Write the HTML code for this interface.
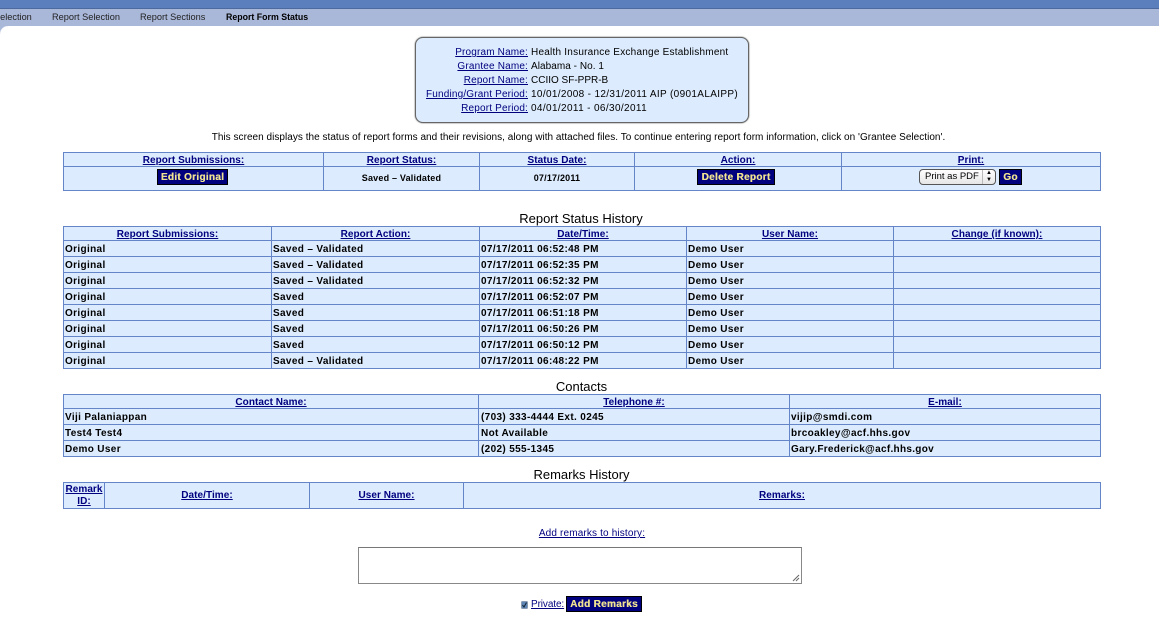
<!DOCTYPE html>
<html><head><meta charset="utf-8"><style>
html,body{margin:0;padding:0;width:1159px;height:626px;overflow:hidden;background:#fff;font-family:"Liberation Sans",Arial,sans-serif;color:#000}
.a{position:absolute;white-space:nowrap}
a{color:#00007f;text-decoration:underline}
#top{left:0;top:0;width:1159px;box-sizing:border-box;height:9px;background:#5b7fbd;border-bottom:1px solid #4c6a9e}
#nav{left:0;top:9px;width:1159px;height:17px;background:#a9b7d9}
#corner{left:0;top:26px;width:8px;height:8px;background:radial-gradient(circle at 100% 100%,#fff 7.5px,#a9b7d9 8.5px)}
.n{top:11px;font-size:9.2px;line-height:13px;color:#222}
table{position:absolute;left:63px;width:1037px;border-collapse:collapse;table-layout:fixed;background:#dcebfd;font-size:10px;letter-spacing:.35px;font-weight:bold}
td{border:1px solid #6585c9;padding:2px 0 0 1px;line-height:12px;overflow:hidden;white-space:nowrap}
td.h{text-align:center;padding:3px 0 0;line-height:10px;letter-spacing:.05px}
td.h2{text-align:center;padding:1px 0 0;letter-spacing:.05px}
td.s{text-align:center;padding:0 0 2px;font-size:9px;letter-spacing:.2px}
.t{width:100%;text-align:center;left:0;font-size:13px;line-height:14px}
.b{position:absolute;background:#00007f;border:1px solid #000;box-sizing:border-box;color:#efe391;font-size:10px;font-weight:bold;text-align:center;letter-spacing:.3px;line-height:15px;white-space:nowrap;text-shadow:.3px 0 0 #efe391}
#box{left:415px;top:37px;width:334px;height:86px;box-sizing:border-box;background:#dcebfd;border:1px solid #666;border-radius:8px;box-shadow:0 0 1.5px #444}
.l{font-size:10px;line-height:14px;letter-spacing:.2px}
.r{width:104px;text-align:right;left:424px;letter-spacing:.17px}
.v{left:531px}
</style></head><body>
<div class="a" id="top"></div><div class="a" id="nav"></div><div class="a" id="corner"></div>
<div class="a n" style="left:-6px">Selection</div>
<div class="a n" style="left:52px">Report Selection</div>
<div class="a n" style="left:140px">Report Sections</div>
<div class="a n" style="left:226px;font-weight:bold;color:#000;font-size:8.8px">Report Form Status</div>

<div class="a" id="box"></div>
<div class="a l r" style="top:46px"><a>Program Name:</a></div><div class="a l v" style="top:46px;letter-spacing:.23px">Health Insurance Exchange Establishment</div>
<div class="a l r" style="top:60px"><a>Grantee Name:</a></div><div class="a l v" style="top:60px;letter-spacing:.05px">Alabama - No. 1</div>
<div class="a l r" style="top:74px"><a>Report Name:</a></div><div class="a l v" style="top:74px;letter-spacing:0">CCIIO SF-PPR-B</div>
<div class="a l r" style="top:88px"><a>Funding/Grant Period:</a></div><div class="a l v" style="top:88px;letter-spacing:.35px">10/01/2008 - 12/31/2011 AIP (0901ALAIPP)</div>
<div class="a l r" style="top:102px"><a>Report Period:</a></div><div class="a l v" style="top:102px;letter-spacing:.37px">04/01/2011 - 06/30/2011</div>

<div class="a l" style="left:0;width:1157px;text-align:center;top:131px;letter-spacing:.03px">This screen displays the status of report forms and their revisions, along with attached files. To continue entering report form information, click on 'Grantee Selection'.</div>

<table style="top:152px"><colgroup><col style="width:260px"><col style="width:156px"><col style="width:155px"><col style="width:207px"><col style="width:259px"></colgroup>
<tr style="height:14px"><td class="h"><a>Report Submissions:</a></td><td class="h"><a>Report Status:</a></td><td class="h"><a>Status Date:</a></td><td class="h"><a>Action:</a></td><td class="h"><a>Print:</a></td></tr>
<tr style="height:24px"><td></td><td class="s">Saved – Validated</td><td class="s">07/17/2011</td><td></td><td></td></tr></table>
<div class="b" style="left:157px;top:169px;width:71px;height:16px">Edit Original</div>
<div class="b" style="left:697px;top:169px;width:78px;height:16px">Delete Report</div>
<div class="a" style="left:919px;top:169px;width:77px;height:16px;box-sizing:border-box;border:1px solid #555;border-radius:4px;background:linear-gradient(#fff,#e6e6e6);font-size:9.5px;line-height:14px;padding-left:5px">Print as PDF<span style="position:absolute;right:0;top:0;bottom:0;width:12px;border-left:1px solid #bbb;font-size:6px;line-height:7px;text-align:center">▲<br>▼</span></div>
<div class="b" style="left:999px;top:169px;width:23px;height:16px">Go</div>

<div class="a t" style="top:212px;width:1162px">Report Status History</div>
<table style="top:226px"><colgroup><col style="width:208px"><col style="width:208px"><col style="width:207px"><col style="width:207px"><col style="width:207px"></colgroup>
<tr style="height:14px"><td class="h"><a>Report Submissions:</a></td><td class="h"><a>Report Action:</a></td><td class="h"><a>Date/Time:</a></td><td class="h"><a>User Name:</a></td><td class="h"><a>Change (if known):</a></td></tr>
<tr style="height:16px"><td>Original</td><td>Saved – Validated</td><td>07/17/2011 06:52:48 PM</td><td>Demo User</td><td></td></tr>
<tr style="height:16px"><td>Original</td><td>Saved – Validated</td><td>07/17/2011 06:52:35 PM</td><td>Demo User</td><td></td></tr>
<tr style="height:16px"><td>Original</td><td>Saved – Validated</td><td>07/17/2011 06:52:32 PM</td><td>Demo User</td><td></td></tr>
<tr style="height:16px"><td>Original</td><td>Saved</td><td>07/17/2011 06:52:07 PM</td><td>Demo User</td><td></td></tr>
<tr style="height:16px"><td>Original</td><td>Saved</td><td>07/17/2011 06:51:18 PM</td><td>Demo User</td><td></td></tr>
<tr style="height:16px"><td>Original</td><td>Saved</td><td>07/17/2011 06:50:26 PM</td><td>Demo User</td><td></td></tr>
<tr style="height:16px"><td>Original</td><td>Saved</td><td>07/17/2011 06:50:12 PM</td><td>Demo User</td><td></td></tr>
<tr style="height:16px"><td>Original</td><td>Saved – Validated</td><td>07/17/2011 06:48:22 PM</td><td>Demo User</td><td></td></tr></table>

<div class="a t" style="top:380px;width:1163px">Contacts</div>
<table style="top:394px"><colgroup><col style="width:415px"><col style="width:311px"><col style="width:311px"></colgroup>
<tr style="height:14px"><td class="h"><a>Contact Name:</a></td><td class="h"><a>Telephone #:</a></td><td class="h"><a>E-mail:</a></td></tr>
<tr style="height:16px"><td>Viji Palaniappan</td><td style="padding-left:2px">(703) 333-4444 Ext. 0245</td><td>vijip@smdi.com</td></tr>
<tr style="height:16px"><td>Test4 Test4</td><td style="padding-left:2px">Not Available</td><td>brcoakley@acf.hhs.gov</td></tr>
<tr style="height:16px"><td>Demo User</td><td style="padding-left:2px">(202) 555-1345</td><td style="letter-spacing:.3px">Gary.Frederick@acf.hhs.gov</td></tr></table>

<div class="a t" style="top:468px;width:1163px">Remarks History</div>
<table style="top:482px"><colgroup><col style="width:41px"><col style="width:205px"><col style="width:154px"><col style="width:637px"></colgroup>
<tr style="height:25px"><td class="h2"><a>Remark<br>ID:</a></td><td class="h2"><a>Date/Time:</a></td><td class="h2"><a>User Name:</a></td><td class="h2"><a>Remarks:</a></td></tr></table>

<div class="a l" style="left:0;width:1184px;text-align:center;top:527px;letter-spacing:.15px"><a>Add remarks to history:</a></div>
<div class="a" style="left:358px;top:547px;width:444px;height:37px;box-sizing:border-box;border:1px solid #888;border-top-color:#777;background:#fff"><svg style="position:absolute;right:1px;bottom:1px" width="8" height="8" viewBox="0 0 8 8"><path d="M1 7L7 1M4 7L7 4" stroke="#666" stroke-width="1" fill="none"/></svg></div>
<svg class="a" style="left:521px;top:601px" width="7" height="8" viewBox="0 0 7 8"><rect x=".5" y=".5" width="6" height="7" rx="1" fill="#5f86b5" stroke="#8a9ab0"/><path d="M1.5 4L3 6L5.5 1.5" stroke="#123" fill="none"/></svg>
<div class="a l" style="left:531px;top:598px;letter-spacing:-.1px"><a>Private:</a></div>
<div class="b" style="left:566px;top:596px;width:76px;height:16px">Add Remarks</div>
</body></html>
